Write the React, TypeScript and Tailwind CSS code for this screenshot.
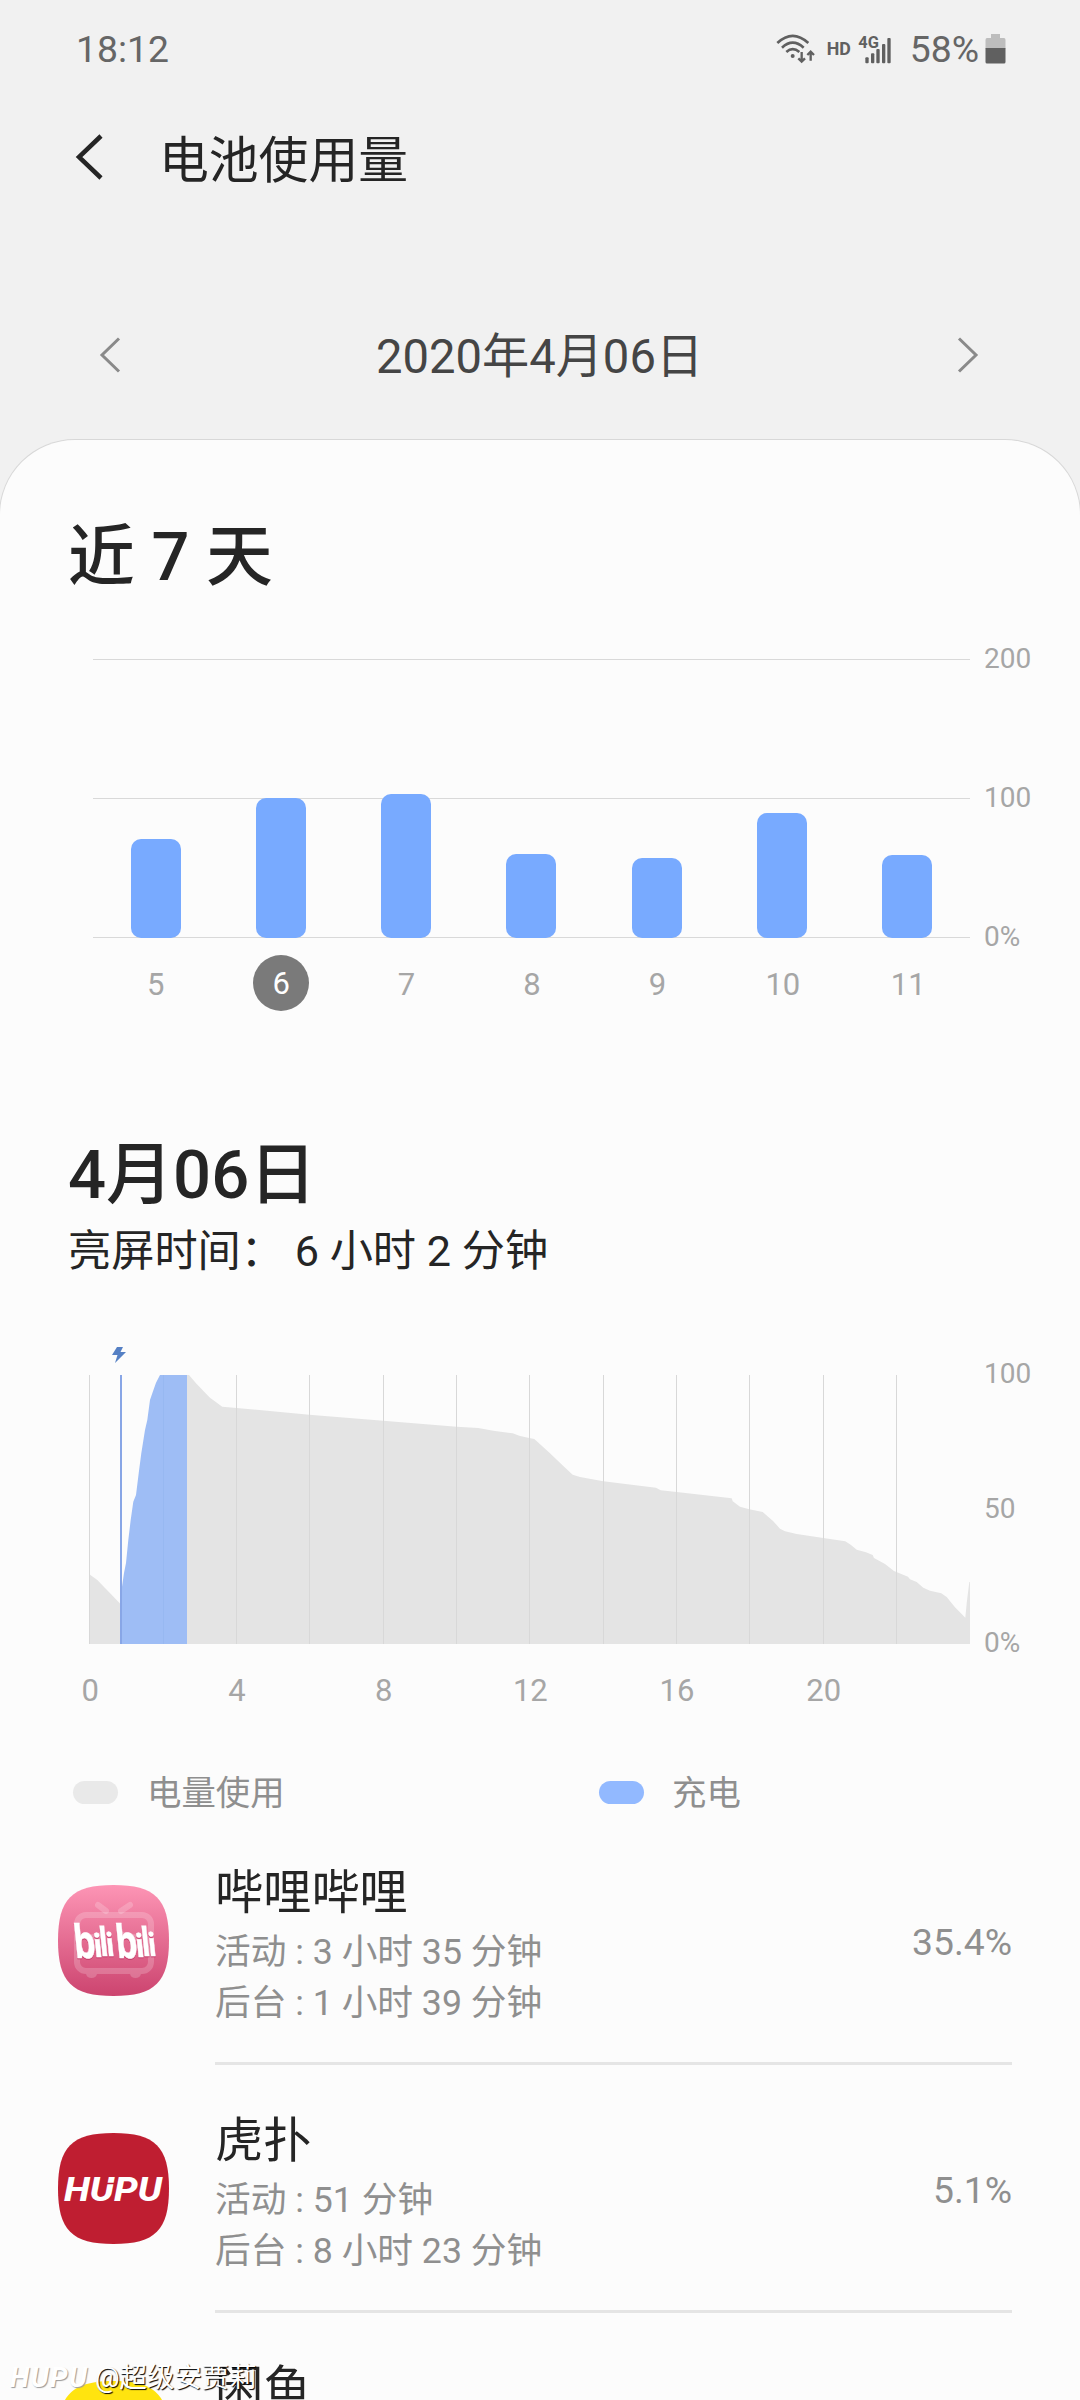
const SQUIRCLE =
  "M55.5 0C97.1 0 111 13.9 111 55.5S97.1 111 55.5 111S0 97.1 0 55.5S13.9 0 55.5 0Z";

const week = [
  { day: "5", height: 99 },
  { day: "6", height: 140 },
  { day: "7", height: 144 },
  { day: "8", height: 84 },
  { day: "9", height: 80 },
  { day: "10", height: 125 },
  { day: "11", height: 83 },
];

const hours = ["0", "4", "8", "12", "16", "20"];
const gridX = [0, 74, 147, 220, 294, 367, 440, 514, 587, 660, 734, 807];

const usageBefore = "M0 199L8.3 205L31 228.5V269H0Z";
const charging =
  "M31 228.5L33 211.7L35 198L37 188L39.3 165L41.7 145L44.3 126.7L47 120L49.7 98.3L52.3 78.3L56 55L58.3 45L61 25L62.7 20L67 7.7L71 0H98V269H31Z";
const usageAfter =
  "M98 0H100L107.7 9L121 22.7L133.3 31.7L147.7 33L220.3 39.7L294.3 45.7L367.7 51.7L389.3 53L404.3 55.7L423.7 58.3L431 61L440.3 63L445.3 64L461 78.3L474.3 91L483.7 99.7L491 102L514.3 106.3L567 112.7L571.7 115.3L587.7 117L642.7 123.3L643.7 126.3L651 131.7L660.3 134.3L673.7 137L684.3 146.3L691 153.7L696 156.3L707.7 159L734.3 163L756.3 166.3L761.7 169.7L767.7 174.7L777 177.3L783.7 180L785 183L796 189L805 196L819 201.7L821 204.3L827.7 207L834.3 212.7L841 215.7L852.3 218.3L857.7 222L866 232.3L876.3 242.7L877.7 228.3L880.3 207H881V269H98Z";

function StatusBar() {
  return (
    <div className="flex h-[98px] items-center justify-between pl-[76px] pr-[74px] text-[37.3px] leading-[44px] text-[#666666]">
      <span>18:12</span>
      <div className="flex items-center">
        <svg className="mr-[12px] h-[32px] w-[39px]" viewBox="110 64 117 96" fill="none" stroke="#606060" strokeWidth="8">
          <path d="M114 94Q160 51 207 94M128 108Q160 78 193 108M141 121Q160 104 180 121" />
          <circle cx="160" cy="133" r="6" fill="#606060" stroke="none" />
          <path d="M187 121V148M177 140L187 150L197 140M214 147V122M204 130L214 120L224 130" strokeWidth="7" />
        </svg>
        <span className="mr-[7px] text-[17.8px] font-bold leading-[20px] text-[#606060]">HD</span>
        <svg className="mr-[19px] h-[32px] w-[33px]" viewBox="355 64 99 96">
          <text x="356" y="109" fontSize="49" fontWeight="700" fill="#606060" textLength="62" lengthAdjust="spacingAndGlyphs">
            4G
          </text>
          <g fill="#606060">
            <rect x="377" y="137" width="10" height="18" rx="3" />
            <rect x="394" y="125" width="10" height="30" rx="3" />
            <rect x="410" y="112" width="10" height="43" rx="3" />
            <rect x="427" y="97" width="10" height="58" rx="3" />
            <rect x="443" y="79" width="10" height="76" rx="3" />
          </g>
        </svg>
        <span className="mr-[6px]">58%</span>
        <svg className="h-[30px] w-[21px]" viewBox="0 0 21 30">
          <path d="M6 0H15V4H19Q20.500 4 20.500 6V14.500H.5V6Q.5 4 2 4H6Z" fill="#bdbdbd" />
          <path d="M.5 14H20.500V28Q20.500 29.500 19 29.500H2Q.5 29.500 .5 28Z" fill="#606060" />
        </svg>
      </div>
    </div>
  );
}

function Header() {
  return (
    <header className="h-[440px]">
      <StatusBar />
      <div className="flex h-[125px] items-center pl-[75px]">
        <svg className="mt-[-8px] h-[48px] w-[30px]" viewBox="0 0 30 48" fill="none" stroke="#252525" strokeWidth="4.500">
          <path d="M26 3L4 24L26 45" />
        </svg>
        <h1 className="ml-[54px] text-[49.8px] leading-[60px] text-[#252525]">电池使用量</h1>
      </div>
      <div className="mt-[92px] flex h-[80px] items-center justify-between pr-[101px] pl-[99px] text-[#454545]">
        <svg className="h-[36px] w-[22px]" viewBox="0 0 22 36" fill="none" stroke="#8a8a8a" strokeWidth="3">
          <path d="M20 1.500L3 18L20 34.500" />
        </svg>
        <span className="pt-[3px] pl-px text-[47.2px] leading-[60px]">2020年4月06日</span>
        <svg className="h-[36px] w-[22px]" viewBox="0 0 22 36" fill="none" stroke="#8a8a8a" strokeWidth="3">
          <path d="M2 1.500L19 18L2 34.500" />
        </svg>
      </div>
    </header>
  );
}

function WeekChart() {
  return (
    <section>
      <div className="flex pl-[93px]">
        <div className="relative h-[279px] w-[877px]">
          <div className="flex h-full flex-col justify-between">
            <div className="h-px bg-[#d9d9d9]" />
            <div className="h-px bg-[#d9d9d9]" />
            <div className="h-px bg-[#d9d9d9]" />
          </div>
          <div className="absolute inset-0 grid grid-cols-7 items-end justify-items-center">
            {week.map((d) => (
              <div key={d.day} className="w-[50px] rounded-[10px] bg-[#78aaff]" style={{ height: d.height }} />
            ))}
          </div>
        </div>
        <div className="mt-[-15px] ml-[14px] flex h-[308px] flex-col justify-between text-[28px] leading-[30px] text-[#a6a6a6]">
          <span>200</span>
          <span>100</span>
          <span>0%</span>
        </div>
      </div>
      <div className="mt-[3px] ml-[93px] grid h-[57px] w-[878px] grid-cols-7 justify-items-center text-[31px] leading-[56px] text-[#a6a6a6]">
        {week.map((d) => (
          <span
            key={d.day}
            className={
              d.day === "6"
                ? "size-[56px] rounded-full bg-[#7a7a7a] pt-[2px] text-center leading-[54px] text-white"
                : "pt-[2px]"
            }
          >
            {d.day}
          </span>
        ))}
      </div>
    </section>
  );
}

function DayChart() {
  return (
    <section>
      <svg className="ml-[112px] h-[16px] w-[14px]" viewBox="0 0 14 16">
        <path d="M5 0H11L8.500 5H14L3 16L5.500 8H0Z" fill="#5580c4" />
      </svg>
      <div className="mt-[12px] flex pl-[89px]">
        <svg className="h-[269px] w-[881px]" viewBox="0 0 881 269">
          <path d={usageBefore} fill="#e4e4e4" />
          <path d={usageAfter} fill="#e4e4e4" />
          <path d={charging} fill="#9ebdf5" />
          {gridX.map((x) => (
            <rect key={x} x={x} y="0" width="1" height="269" fill={x === 74 ? "#97b8f1" : "#d8d8d8"} />
          ))}
          <rect x="31" y="0" width="2" height="269" fill="#88a6e6" />
        </svg>
        <div className="mt-[-16px] ml-[14px] flex h-[299px] flex-col justify-between text-[28px] leading-[30px] text-[#a6a6a6]">
          <span>100</span>
          <span>50</span>
          <span>0%</span>
        </div>
      </div>
      <div className="mt-[15px] ml-[17px] grid w-[880px] grid-cols-6 text-center text-[31px] leading-[36px] text-[#a6a6a6]">
        {hours.map((h) => (
          <span key={h}>{h}</span>
        ))}
      </div>
    </section>
  );
}

function BilibiliIcon() {
  const letters = [
    { c: "b", x: 17, y: 73, s: 46, w: 22 },
    { c: "i", x: 36.5, y: 72, s: 32, w: 9 },
    { c: "l", x: 42.5, y: 71, s: 40, w: 9 },
    { c: "i", x: 49, y: 71, s: 32, w: 8.5 },
    { c: "b", x: 59, y: 73, s: 46, w: 22 },
    { c: "i", x: 78.5, y: 72, s: 32, w: 9 },
    { c: "l", x: 84.5, y: 71, s: 40, w: 9 },
    { c: "i", x: 91, y: 71, s: 32, w: 8.5 },
  ];
  return (
    <svg className="size-[111px]" viewBox="0 0 111 111">
      <defs>
        <linearGradient id="bili" x1="0" y1="0" x2="0" y2="1">
          <stop offset="0" stopColor="#fd95b5" />
          <stop offset="1" stopColor="#cc446f" />
        </linearGradient>
      </defs>
      <path d={SQUIRCLE} fill="url(#bili)" />
      <g fill="none" stroke="#fff" strokeOpacity=".2" strokeWidth="6" strokeLinecap="round">
        <rect x="19" y="30" width="74" height="56" rx="9" />
        <path d="M40 20L48 26M72 20L63 26M31 53L44 50M66 50L80 53" />
      </g>
      <g fill="#fff" fillOpacity=".2">
        <path d="M28 89H39Q38 93 33.500 93T28 89ZM72 89H83Q82 93 77.500 93T72 89Z" />
      </g>
      <g
        className="font-['Open_Sans',sans-serif] font-bold drop-shadow-[0_1.5px_0_#c23a68]"
        fill="#fff"
        stroke="#fff"
        strokeWidth=".5"
      >
        {letters.map((l) => (
          <text
            key={l.x}
            transform={`translate(${l.x} ${l.y}) skewX(6)`}
            fontSize={l.s}
            textLength={l.w}
            lengthAdjust="spacingAndGlyphs"
          >
            {l.c}
          </text>
        ))}
      </g>
    </svg>
  );
}

function HupuIcon() {
  return (
    <svg className="size-[111px]" viewBox="0 0 111 111">
      <path d={SQUIRCLE} fill="#bf1e31" />
      <text x="6" y="68" fontFamily="Roboto, sans-serif" fontSize="33.5" fontWeight="800" fontStyle="italic" fill="#fff" textLength="98" lengthAdjust="spacingAndGlyphs">
        HUPU
      </text>
      <path d="M47 50.500H57" stroke="#bf1e31" strokeWidth="1.500" />
    </svg>
  );
}

function XianyuIcon() {
  return (
    <svg className="size-[111px]" viewBox="0 0 111 111">
      <path d={SQUIRCLE} fill="#ffe40f" />
    </svg>
  );
}

const apps = [
  { name: "哔哩哔哩", active: "活动 : 3 小时 35 分钟", background: "后台 : 1 小时 39 分钟", percent: "35.4%", Icon: BilibiliIcon },
  { name: "虎扑", active: "活动 : 51 分钟", background: "后台 : 8 小时 23 分钟", percent: "5.1%", Icon: HupuIcon },
  { name: "闲鱼", active: "", background: "", percent: "", Icon: XianyuIcon },
];

function AppList() {
  return (
    <ul>
      {apps.map(({ name, active, background, percent, Icon }) => (
        <li key={name} className="flex h-[248px] pl-[58px]">
          <div className="mt-[68px]">
            <Icon />
          </div>
          <div className="ml-[46px] flex h-[248px] w-[797px] border-b-[3px] border-[#e5e5e5]">
            <div className="pt-[46px]">
              <div className="text-[48.2px] leading-[60px] text-[#252525]">{name}</div>
              <div className="mt-[4px] text-[35.7px] leading-[51px] text-[#8f8f8f]">{active}</div>
              <div className="text-[35.7px] leading-[51px] text-[#8f8f8f]">{background}</div>
            </div>
            <div className="ml-auto pt-[104px] text-[37.3px] leading-[42px] text-[#8f8f8f]">{percent}</div>
          </div>
        </li>
      ))}
    </ul>
  );
}

function Watermark() {
  return (
    <div className="absolute top-[2358px] left-[10px] flex items-center text-white">
      <span className="w-[85px] text-[28px] leading-[40px] font-bold tracking-[1.5px] italic [text-shadow:1px_1px_1px_#999]">HUPU</span>
      <span className="text-[27.4px] leading-[40px] whitespace-nowrap [text-shadow:1px_1px_1px_#000]">@超级安贾莉</span>
    </div>
  );
}

export default function App() {
  return (
    <div className="relative h-[2400px] w-[1080px] overflow-hidden bg-[#f1f1f1] font-['Roboto','Noto_Sans_CJK_SC',sans-serif]">
      <Header />
      <main className="h-[1960px] overflow-hidden rounded-t-[75px] bg-[#fcfcfc] shadow-[0_0_0_1px_#d8d8d8]">
        <h2 className="mt-[72px] ml-[68px] text-[66.8px] leading-[90px] font-medium text-[#252525]">近 7 天</h2>
        <div className="mt-[57px]">
          <WeekChart />
        </div>
        <h2 className="mt-[118px] ml-[68px] text-[67px] leading-[90px] font-medium text-[#252525]">4月06日</h2>
        <p className="mt-[2px] ml-[68px] text-[43.2px] leading-[60px] whitespace-pre text-[#252525]">亮屏时间： 6 小时 2 分钟</p>
        <div className="mt-[65px]">
          <DayChart />
        </div>
        <div className="mt-[58px] flex h-[50px] items-center pl-[73px] text-[34.4px] leading-[50px] text-[#8f8f8f]">
          <div className="flex w-[526px] items-center">
            <span className="mr-[29px] h-[23px] w-[45px] rounded-full bg-[#e9e9e9]" />
            <span className="pt-[2px] leading-[48px]">电量使用</span>
          </div>
          <span className="mr-[28px] h-[23px] w-[45px] rounded-full bg-[#92b9ff]" />
          <span className="pt-[2px] leading-[48px]">充电</span>
        </div>
        <AppList />
      </main>
      <Watermark />
    </div>
  );
}
